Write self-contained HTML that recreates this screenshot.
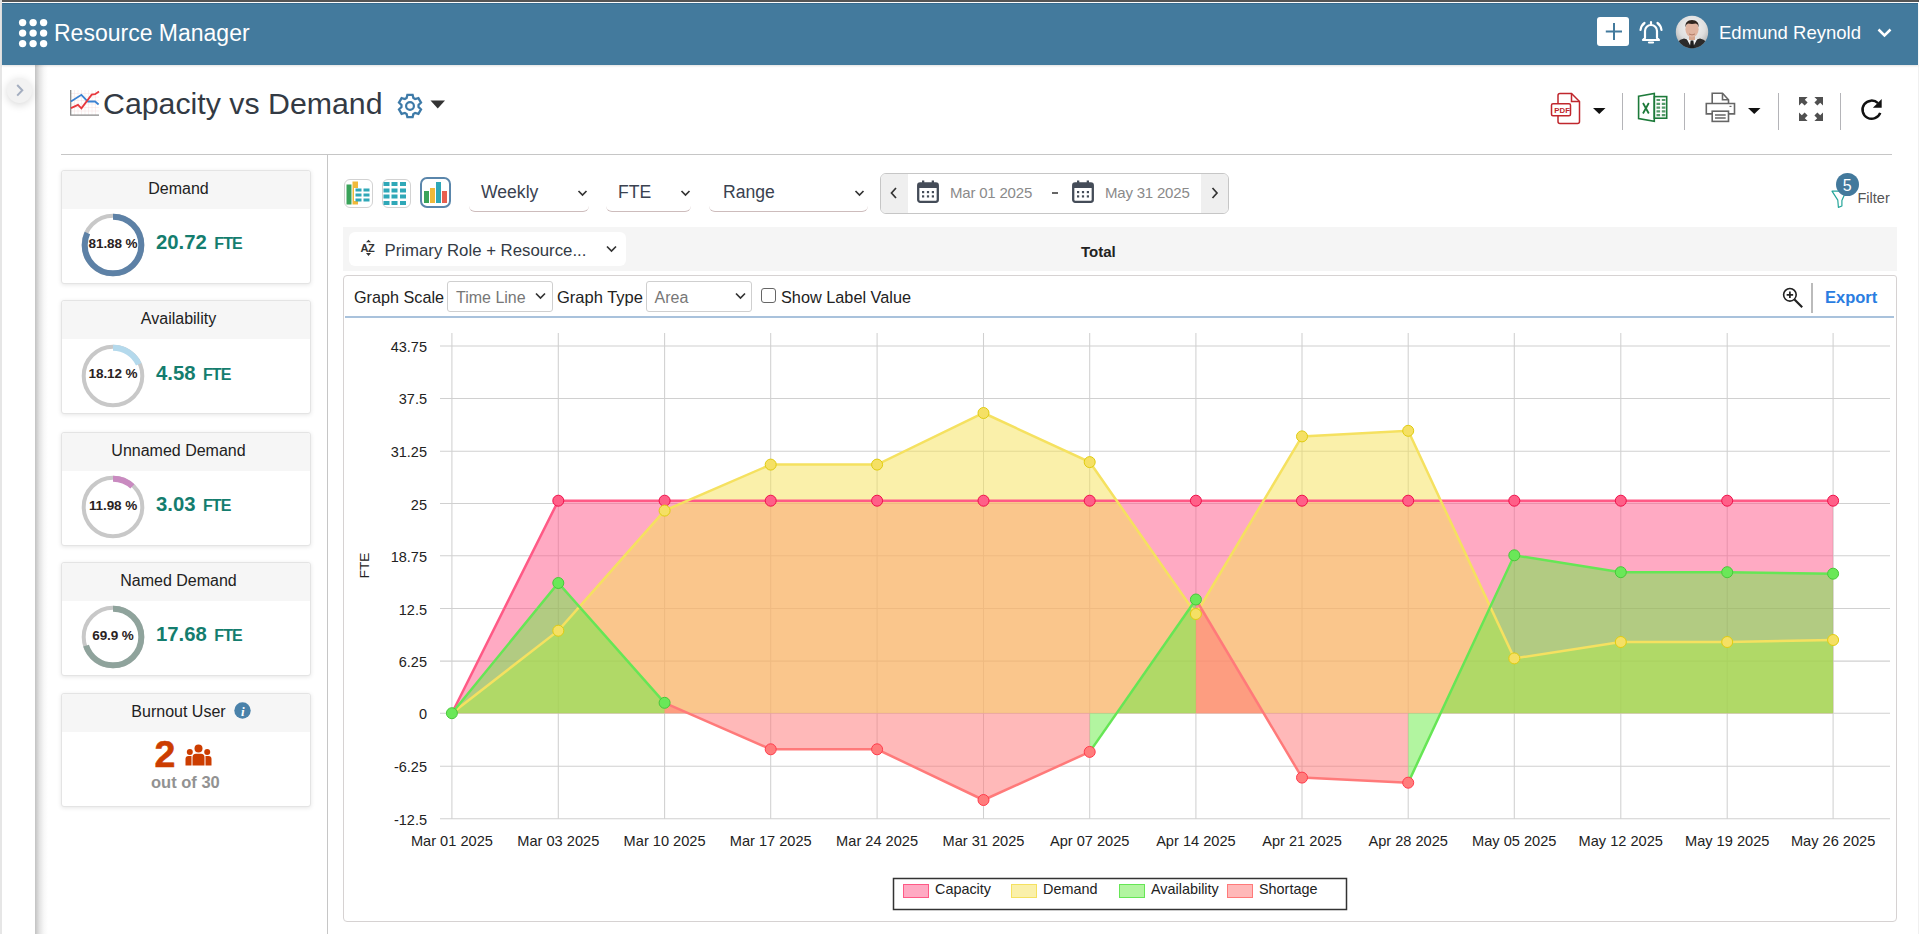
<!DOCTYPE html>
<html><head><meta charset="utf-8">
<style>
*{box-sizing:border-box;margin:0;padding:0}
html,body{width:1919px;height:934px;overflow:hidden;background:#fff;font-family:"Liberation Sans",sans-serif;color:#333}
.a{position:absolute}
.t{position:absolute;white-space:nowrap;line-height:1}
#topline{left:0;top:0;width:1919px;height:1.5px;background:#555}
#hdr{left:2px;top:3px;width:1916px;height:62px;background:#437a9d;border-top:1px solid #376c90;box-shadow:0 1px 2px rgba(0,0,0,0.12);z-index:2}
#lborder{left:0;top:0;width:1.5px;height:934px;background:#e6e6e6}
#rborder{left:1917.5px;top:65px;width:1.5px;height:869px;background:#f0f0f0}
#sidebar{left:2px;top:65px;width:33px;height:869px;background:#fff}
#shadow{left:35px;top:65px;width:13px;height:869px;background:linear-gradient(90deg,#c2c2c2 0%,#e4e4e4 35%,#f8f8f8 70%,#fff 100%)}
.card{position:absolute;left:61px;width:250px;height:114px;background:#fff;border:1px solid #e4e4e4;border-radius:3px;box-shadow:0 1px 4px rgba(0,0,0,0.10)}
.card .hd{position:absolute;left:0;top:0;width:100%;height:38px;background:#f6f6f6;border-radius:3px 3px 0 0}
.card .ttl{position:absolute;left:0;width:233px;text-align:center;top:10px;font-size:16px;color:#222;line-height:1}
.card svg{position:absolute;left:18.9px;top:42.6px}
.pct{position:absolute;left:19px;top:66px;width:64px;text-align:center;font-size:13.5px;font-weight:bold;color:#2a2222;line-height:1;letter-spacing:-0.1px}
.val{position:absolute;top:61.5px;font-size:20.3px;font-weight:bold;color:#147d6e;line-height:1}
.val span{font-size:16px;margin-left:7.5px;letter-spacing:-0.9px}
.sel{position:absolute;top:176px;height:36px;border-bottom:1.5px solid #cdbcbc;border-radius:0 0 6px 6px}
.sel .tx{position:absolute;left:12px;top:8px;font-size:17.6px;color:#3a4250;line-height:1}
.chev{position:absolute}
.sep{position:absolute;top:93px;width:1.5px;height:37px;background:#b4b4b8}
.tk{font-family:"Liberation Sans",sans-serif;font-size:14px;fill:#222}
.lg{font-family:"Liberation Sans",sans-serif;font-size:14px;fill:#222}
</style></head><body>
<div id="topline" class="a"></div>
<div id="lborder" class="a"></div>
<div id="hdr" class="a">
  <svg class="a" style="left:15px;top:13px" width="32" height="32" viewBox="0 0 32 32" fill="#fff">
    <circle cx="5.6" cy="5.6" r="3.7"/><circle cx="16.1" cy="5.6" r="3.7"/><circle cx="26.6" cy="5.6" r="3.7"/>
    <circle cx="5.6" cy="16.1" r="3.7"/><circle cx="16.1" cy="16.1" r="3.7"/><circle cx="26.6" cy="16.1" r="3.7"/>
    <circle cx="5.6" cy="26.6" r="3.7"/><circle cx="16.1" cy="26.6" r="3.7"/><circle cx="26.6" cy="26.6" r="3.7"/>
  </svg>
  <div class="t" style="left:52px;top:18px;font-size:23px;color:#fff">Resource Manager</div>
  <div class="a" style="left:1595px;top:13px;width:32px;height:29px;background:#fff;border-radius:3px"></div>
  <svg class="a" style="left:1595px;top:13px" width="32" height="29"><path d="M17 6 V23 M8.8 14.5 H25" stroke="#437a9d" stroke-width="2"/></svg>
  <svg class="a" style="left:1635px;top:15px" width="28" height="26" viewBox="0 0 28 26" fill="none" stroke="#fff" stroke-width="2.2" stroke-linecap="round">
    <path d="M8 19 V12 a6 6 0 0 1 12 0 V19 l2 2 H6 z" stroke-linejoin="round"/>
    <path d="M12 23.5 h4"/>
    <path d="M3.5 11 a10 10 0 0 1 4 -7"/><path d="M24.5 11 a10 10 0 0 0 -4 -7"/>
    <path d="M14 3 v2"/>
  </svg>
  <svg class="a" style="left:1673px;top:10.5px" width="34" height="34" viewBox="0 0 34 34">
    <defs><clipPath id="av"><circle cx="17" cy="17" r="16.2"/></clipPath>
    <radialGradient id="avg" cx="50%" cy="35%" r="65%"><stop offset="0" stop-color="#f6f6f6"/><stop offset="0.6" stop-color="#dedede"/><stop offset="1" stop-color="#a9a9a9"/></radialGradient></defs>
    <g clip-path="url(#av)">
      <rect width="34" height="34" fill="url(#avg)"/>
      <path d="M0 34 Q1 25 9 23.5 L17 26 L25 23.5 Q33 25 34 34 Z" fill="#2b2b2b"/>
      <path d="M11.5 23.5 L17 34 L22.5 23.5 L17 25.5 Z" fill="#f4f4f4"/>
      <path d="M15.6 25.5 h2.8 l0.9 8.5 h-4.6 z" fill="#1e1e1e"/>
      <rect x="14" y="19" width="6" height="6" fill="#d6a68e"/>
      <ellipse cx="17" cy="14.2" rx="6.6" ry="8.3" fill="#e0b4a0"/>
      <path d="M10.2 12.5 Q9.8 5.2 17 5 Q24.2 5.2 23.8 12.5 Q23 9 21 8.6 Q17 9.4 13 8.6 Q11 9 10.2 12.5z" fill="#2f241e"/>
      <path d="M14 19 Q17 20.8 20 19" stroke="#a66e5a" stroke-width="0.8" fill="none"/>
    </g>
  </svg>
  <div class="t" style="left:1717px;top:20px;font-size:18.5px;color:#fff">Edmund Reynold</div>
  <svg class="a" style="left:1873px;top:22.5px" width="18" height="12"><path d="M3.5 2.5 L9.5 8.5 L15.5 2.5" stroke="#fff" stroke-width="2.5" fill="none"/></svg>
</div>
<div id="sidebar" class="a"></div>
<div id="shadow" class="a"></div>
<div id="rborder" class="a"></div>
<div class="a" style="left:7px;top:78px;width:25px;height:25px;border-radius:50%;background:#f2f2f2;box-shadow:0 2px 9px rgba(0,0,0,0.16)"></div>
<svg class="a" style="left:7px;top:78px" width="25" height="25"><path d="M10.2 7 L15.3 12.3 L10.2 17.6" stroke="#a4aec0" stroke-width="2" fill="none"/></svg>

<!-- title -->
<svg class="a" style="left:69px;top:89px" width="32" height="28" viewBox="0 0 32 28">
  <g stroke="#f6e0e0" stroke-width="0.5"><path d="M2 4.5 H30 M2 8 H30 M2 11.5 H30 M2 15 H30 M2 18.5 H30 M2 22 H30 M5.5 1 V26 M9 1 V26 M12.5 1 V26 M16 1 V26 M19.5 1 V26 M23 1 V26 M26.5 1 V26"/></g>
  <path d="M1.7 1.1 V26.2 H30" stroke="#8a8a8a" stroke-width="1.3" fill="none"/>
  <path d="M1.9 12.5 L12.4 5.8 L18.8 12.5 L26.1 12.5 L29.6 15.5" stroke="#3a82d2" stroke-width="1.8" fill="none"/>
  <path d="M1.9 19.1 L9 15.9 L12.4 19.3 L22.7 5.6 L26.1 5.2 L30 2.4" stroke="#e8383d" stroke-width="1.8" fill="none"/>
</svg>
<div class="t" style="left:103px;top:89px;font-size:30.3px;color:#333a44">Capacity vs Demand</div>
<svg class="a" style="left:395.8px;top:91.5px" width="28" height="28" viewBox="0 0 28 28"><path fill="none" stroke="#3d7aa8" stroke-width="2.3" stroke-linejoin="miter" d="M10.60 6.10 L11.40 2.80 L16.60 2.80 L17.40 6.10 L19.14 7.11 L22.40 6.15 L25.00 10.65 L22.54 12.99 L22.54 15.01 L25.00 17.35 L22.40 21.85 L19.14 20.89 L17.40 21.90 L16.60 25.20 L11.40 25.20 L10.60 21.90 L8.86 20.89 L5.60 21.85 L3.00 17.35 L5.46 15.01 L5.46 12.99 L3.00 10.65 L5.60 6.15 L8.86 7.11Z"/><circle cx="14" cy="14" r="3.9" fill="none" stroke="#3d7aa8" stroke-width="2.2"/></svg>
<svg class="a" style="left:429.5px;top:100px" width="16" height="10"><path d="M0.5 0.5 H15 L7.75 8.5z" fill="#333"/></svg>

<!-- right toolbar -->
<svg class="a" style="left:1549px;top:92px" width="33" height="33" viewBox="0 0 33 33" fill="none" stroke="#c0272d" stroke-width="1.5">
  <path d="M9 11.5 V3.5 Q9 1.5 11 1.5 H22.5 L30.5 9.5 V29.5 Q30.5 31.5 28.5 31.5 H11 Q9 31.5 9 29.5 V24"/>
  <path d="M22.5 1.5 V9.5 H30.5"/>
  <rect x="2.5" y="11.8" width="19" height="12" rx="1.5"/>
  <text x="5.3" y="20.8" font-family="Liberation Sans" font-weight="bold" font-size="7.8" fill="#c0272d" stroke="none">PDF</text>
</svg>
<svg class="a" style="left:1592.5px;top:108px" width="14" height="8"><path d="M0 0 H12.5 L6.25 6z" fill="#111"/></svg>
<div class="sep" style="left:1621.5px"></div>
<svg class="a" style="left:1636px;top:92px" width="33" height="31" viewBox="0 0 33 31" fill="none" stroke="#1d7a3a" stroke-width="1.6">
  <path d="M2.6 4.2 L18.3 1.5 V29.4 L2.6 26.6 Z"/>
  <rect x="18.3" y="4.6" width="12.4" height="21.6"/>
  <path d="M20.5 8 h3.6 M25.8 8 h3.6 M20.5 11.8 h3.6 M25.8 11.8 h3.6 M20.5 15.6 h3.6 M25.8 15.6 h3.6 M20.5 19.4 h3.6 M25.8 19.4 h3.6 M20.5 23.2 h3.6 M25.8 23.2 h3.6" stroke-width="2.2" opacity="0.75"/>
  <path d="M7 11 L12.8 21.5 M12.8 11 L7 21.5" stroke-width="1.8"/>
</svg>
<div class="sep" style="left:1683.5px"></div>
<svg class="a" style="left:1704px;top:91px" width="33" height="33" viewBox="0 0 33 33" fill="none" stroke="#666" stroke-width="1.6">
  <path d="M8.2 12.5 V2.3 H18.5 L24.5 8.7 V12.5"/><path d="M18.5 2.3 V8.7 H24.5"/>
  <path d="M8.2 22.9 H2.3 V12.5 H30.5 V22.9 H24.5"/>
  <rect x="8.2" y="20.2" width="16.3" height="10.2" fill="#fff"/><path d="M11 24 H21.7 M11 26.9 H21.7" stroke-width="1.5"/><path d="M25.5 15.4 h2" stroke-width="1.2"/>
</svg>
<svg class="a" style="left:1748px;top:108px" width="14" height="8"><path d="M0 0 H12.5 L6.25 6z" fill="#111"/></svg>
<div class="sep" style="left:1777.5px"></div>
<svg class="a" style="left:1798px;top:96px" width="26" height="26" viewBox="0 0 26 26" fill="#505050">
  <path d="M1 1 H9.6 L6.8 3.8 L9.6 6.6 L6.6 9.6 L3.8 6.8 L1 9.6 Z"/>
  <path d="M25 1 H16.4 L19.2 3.8 L16.4 6.6 L19.4 9.6 L22.2 6.8 L25 9.6 Z"/>
  <path d="M1 25 H9.6 L6.8 22.2 L9.6 19.4 L6.6 16.4 L3.8 19.2 L1 16.4 Z"/>
  <path d="M25 25 H16.4 L19.2 22.2 L16.4 19.4 L19.4 16.4 L22.2 19.2 L25 16.4 Z"/>
</svg>
<div class="sep" style="left:1839.5px"></div>
<svg class="a" style="left:1859px;top:96px" width="26" height="26" viewBox="0 0 26 26">
  <path d="M19 7.2 A9.1 9.1 0 1 0 21.2 16.8" fill="none" stroke="#111" stroke-width="2.5"/>
  <path d="M13.9 11.8 L22.7 11.8 L22.7 2.9 Z" fill="#111"/>
</svg>

<div class="a" style="left:61px;top:153.5px;width:1831px;height:1.2px;background:#c6c6c6"></div>
<div class="a" style="left:326.8px;top:154px;width:1.2px;height:780px;background:#c6c6c6"></div>

<!-- KPI cards -->
<div class="card" style="top:169.5px">
  <div class="hd"></div><div class="ttl">Demand</div>
  <svg width="64" height="64" viewBox="0 0 64 64"><circle cx="32" cy="32" r="29.3" fill="none" stroke="#c8c8c8" stroke-width="4"/><circle cx="32" cy="32" r="28.3" fill="none" stroke="#5d81a6" stroke-width="6" stroke-dasharray="145.59 300" transform="rotate(-90 32 32)"/></svg>
  <div class="pct">81.88 %</div>
  <div class="val" style="left:94px">20.72<span>FTE</span></div>
</div>
<div class="card" style="top:300px">
  <div class="hd"></div><div class="ttl">Availability</div>
  <svg width="64" height="64" viewBox="0 0 64 64"><circle cx="32" cy="32" r="29.3" fill="none" stroke="#c8c8c8" stroke-width="4"/><circle cx="32" cy="32" r="28.3" fill="none" stroke="#b4d9ec" stroke-width="6" stroke-dasharray="32.22 300" transform="rotate(-90 32 32)"/></svg>
  <div class="pct">18.12 %</div>
  <div class="val" style="left:94px">4.58<span>FTE</span></div>
</div>
<div class="card" style="top:431.5px">
  <div class="hd"></div><div class="ttl">Unnamed Demand</div>
  <svg width="64" height="64" viewBox="0 0 64 64"><circle cx="32" cy="32" r="29.3" fill="none" stroke="#c8c8c8" stroke-width="4"/><circle cx="32" cy="32" r="28.3" fill="none" stroke="#c98ac0" stroke-width="6" stroke-dasharray="21.30 300" transform="rotate(-90 32 32)"/></svg>
  <div class="pct">11.98 %</div>
  <div class="val" style="left:94px">3.03<span>FTE</span></div>
</div>
<div class="card" style="top:561.5px">
  <div class="hd"></div><div class="ttl">Named Demand</div>
  <svg width="64" height="64" viewBox="0 0 64 64"><circle cx="32" cy="32" r="29.3" fill="none" stroke="#c8c8c8" stroke-width="4"/><circle cx="32" cy="32" r="28.3" fill="none" stroke="#8fa39c" stroke-width="6" stroke-dasharray="124.29 300" transform="rotate(-90 32 32)"/></svg>
  <div class="pct">69.9 %</div>
  <div class="val" style="left:94px">17.68<span>FTE</span></div>
</div>
<div class="card" style="top:692.5px">
  <div class="hd"></div><div class="ttl">Burnout User</div>
  <svg style="left:172px;top:8px" width="17" height="17" viewBox="0 0 17 17"><circle cx="8.5" cy="8.5" r="8.2" fill="#4a82aa"/><text x="8.8" y="13.5" text-anchor="middle" font-family="Liberation Serif" font-style="italic" font-weight="bold" font-size="13" fill="#fff">i</text></svg>
  <div class="t" style="left:92.5px;top:42px;font-size:37.5px;font-weight:bold;color:#cc3d00;-webkit-text-stroke:0.6px #cc3d00">2</div>
  <svg style="left:123px;top:50px" width="27" height="22" viewBox="0 0 27 22" fill="#cc3d00">
    <circle cx="13.5" cy="4.5" r="4"/><circle cx="4.8" cy="8" r="3"/><circle cx="22.2" cy="8" r="3"/>
    <path d="M7.5 21.5 V13.5 Q7.5 9.8 11 9.8 H16 Q19.5 9.8 19.5 13.5 V21.5 Z"/>
    <path d="M0.5 21.5 V15 Q0.5 12 3.5 12 H6.5 V21.5 Z"/><path d="M26.5 21.5 V15 Q26.5 12 23.5 12 H20.5 V21.5 Z"/>
  </svg>
  <div class="t" style="left:89px;top:80px;font-size:16.5px;font-weight:bold;color:#929292">out of 30</div>
</div>

<!-- toolbar -->
<div class="a" style="left:343.5px;top:178.8px;width:29px;height:29px;border:1px solid #d2d2d2;border-radius:6px"></div>
<svg class="a" style="left:343.5px;top:179.5px" width="29" height="28">
  <rect x="2.5" y="4.5" width="5" height="20" fill="#3aa35a"/><rect x="8.5" y="1.5" width="5.5" height="23" fill="#f0b93a"/>
  <rect x="10" y="8" width="6" height="13" fill="#fff"/>
  <g fill="#2fa8b8"><rect x="11.5" y="8.5" width="6" height="3"/><rect x="19.5" y="8.5" width="6" height="3"/><rect x="11.5" y="13.5" width="6" height="3"/><rect x="19.5" y="13.5" width="6" height="3"/><rect x="11.5" y="18.5" width="6" height="3"/><rect x="19.5" y="18.5" width="6" height="3"/></g>
</svg>
<div class="a" style="left:381.5px;top:178.8px;width:29px;height:29px;border:1px solid #d2d2d2;border-radius:6px"></div>
<svg class="a" style="left:380.3px;top:178.6px" width="29" height="28"><g fill="#2fa8b8">
  <rect x="3.5" y="3" width="6" height="4"/><rect x="11.5" y="3" width="6" height="4"/><rect x="20" y="3" width="6" height="4"/>
  <rect x="3.5" y="9.5" width="6" height="4"/><rect x="11.5" y="9.5" width="6" height="4"/><rect x="20" y="9.5" width="6" height="4"/>
  <rect x="3.5" y="15.5" width="6" height="4"/><rect x="11.5" y="15.5" width="6" height="4"/><rect x="20" y="15.5" width="6" height="4"/>
  <rect x="3.5" y="22" width="6" height="4"/><rect x="11.5" y="22" width="6" height="4"/><rect x="20" y="22" width="6" height="4"/></g></svg>
<div class="a" style="left:420px;top:177px;width:31px;height:31px;border:2px solid #5a86ab;border-radius:7px"></div>
<svg class="a" style="left:420px;top:177px" width="31" height="31">
  <rect x="4" y="14" width="5" height="12" fill="#3aa35a"/><rect x="10" y="11" width="5" height="15" fill="#f0b93a"/>
  <rect x="16" y="5" width="5" height="21" fill="#2fa8b8"/><rect x="22" y="14" width="5" height="12" fill="#e8604f"/>
</svg>

<div class="sel" style="left:469px;width:120px"><div class="tx">Weekly</div>
  <svg class="chev" style="left:108px;top:13px" width="12" height="9"><path d="M1.5 2 L5.5 6 L9.5 2" stroke="#333" stroke-width="1.7" fill="none"/></svg></div>
<div class="sel" style="left:606px;width:85px"><div class="tx">FTE</div>
  <svg class="chev" style="left:74px;top:13px" width="12" height="9"><path d="M1.5 2 L5.5 6 L9.5 2" stroke="#333" stroke-width="1.7" fill="none"/></svg></div>
<div class="sel" style="left:709px;width:159px"><div class="tx" style="left:14px">Range</div>
  <svg class="chev" style="left:145px;top:13px" width="12" height="9"><path d="M1.5 2 L5.5 6 L9.5 2" stroke="#333" stroke-width="1.7" fill="none"/></svg></div>

<!-- date range -->
<div class="a" style="left:880px;top:173px;width:349px;height:40.5px;border:1.2px solid #c6c6c6;border-radius:6px;background:#fff;overflow:hidden">
  <div class="a" style="left:0;top:0;width:27px;height:40px;background:#efefef"></div>
  <div class="a" style="right:0;top:0;width:27px;height:40px;background:#efefef"></div>
</div>
<svg class="a" style="left:888px;top:186px" width="12" height="14"><path d="M8 2 L3.5 7 L8 12" stroke="#333" stroke-width="1.7" fill="none"/></svg>
<svg class="a" style="left:1209px;top:186px" width="12" height="14"><path d="M3.5 2 L8 7 L3.5 12" stroke="#333" stroke-width="1.7" fill="none"/></svg>
<svg class="a" style="left:917px;top:180px" width="22" height="23" viewBox="0 0 22 23">
  <rect x="1.2" y="3.5" width="19.6" height="18.3" rx="2" fill="none" stroke="#444c58" stroke-width="2.3"/>
  <rect x="1" y="3.5" width="20" height="4.5" fill="#444c58"/>
  <rect x="5" y="0.5" width="2.3" height="5" fill="#444c58"/><rect x="14.7" y="0.5" width="2.3" height="5" fill="#444c58"/>
  <g fill="#444c58"><rect x="5" y="11" width="2.2" height="2.2"/><rect x="9.9" y="11" width="2.2" height="2.2"/><rect x="14.8" y="11" width="2.2" height="2.2"/>
  <rect x="5" y="15.3" width="2.2" height="2.2"/><rect x="9.9" y="15.3" width="2.2" height="2.2"/><rect x="14.8" y="15.3" width="2.2" height="2.2"/></g>
</svg>
<div class="t" style="left:950px;top:185px;font-size:15px;color:#8a8a8a;letter-spacing:-0.2px">Mar 01 2025</div>
<div class="a" style="left:1052px;top:192.2px;width:5.5px;height:2px;background:#666"></div>
<svg class="a" style="left:1072px;top:180px" width="22" height="23" viewBox="0 0 22 23">
  <rect x="1.2" y="3.5" width="19.6" height="18.3" rx="2" fill="none" stroke="#444c58" stroke-width="2.3"/>
  <rect x="1" y="3.5" width="20" height="4.5" fill="#444c58"/>
  <rect x="5" y="0.5" width="2.3" height="5" fill="#444c58"/><rect x="14.7" y="0.5" width="2.3" height="5" fill="#444c58"/>
  <g fill="#444c58"><rect x="5" y="11" width="2.2" height="2.2"/><rect x="9.9" y="11" width="2.2" height="2.2"/><rect x="14.8" y="11" width="2.2" height="2.2"/>
  <rect x="5" y="15.3" width="2.2" height="2.2"/><rect x="9.9" y="15.3" width="2.2" height="2.2"/><rect x="14.8" y="15.3" width="2.2" height="2.2"/></g>
</svg>
<div class="t" style="left:1105px;top:185px;font-size:15px;color:#8a8a8a;letter-spacing:-0.2px">May 31 2025</div>

<!-- filter -->
<svg class="a" style="left:1830px;top:189px" width="18" height="21"><path d="M2 2.2 H16 L11.9 11.5 V17 L8.4 18.4 L7.8 11.2 Z" fill="none" stroke="#26a69a" stroke-width="1.2" stroke-linejoin="round"/></svg>
<div class="a" style="left:1835.8px;top:173.2px;width:23px;height:23px;border-radius:50%;background:#43799c"></div>
<div class="t" style="left:1835.8px;top:178px;width:23px;text-align:center;font-size:16px;color:#fff">5</div>
<div class="t" style="left:1857.5px;top:191px;font-size:14.5px;color:#555">Filter</div>

<!-- band -->
<div class="a" style="left:343px;top:227px;width:1554px;height:44px;background:#f5f5f5"></div>
<div class="a" style="left:348.5px;top:232px;width:277px;height:34px;background:#fff;border-radius:6px"></div>
<svg class="a" style="left:360px;top:238px" width="18" height="20" viewBox="0 0 18 20">
  <text x="0.6" y="13.9" font-family="Liberation Sans" font-weight="bold" font-size="11" fill="#333" letter-spacing="-0.6">AZ</text>
  <path d="M6 4.2 L8.5 1.8 L11 4.2 Z M6 15 L11 15 L8.5 17.9 Z" fill="#333"/>
</svg>
<div class="t" style="left:384.5px;top:242.8px;font-size:16.8px;color:#333a44">Primary Role + Resource...</div>
<svg class="a" style="left:604.5px;top:243.8px" width="13" height="10"><path d="M2 2.5 L6.5 7 L11 2.5" stroke="#333" stroke-width="1.7" fill="none"/></svg>
<div class="t" style="left:1081px;top:244px;font-size:15px;font-weight:bold;color:#222">Total</div>

<!-- chart panel -->
<div class="a" style="left:343px;top:275px;width:1554px;height:647px;border:1.2px solid #d6d2d2;border-radius:4px 3px 4px 4px;background:#fff"></div>
<div class="t" style="left:354px;top:289px;font-size:16.2px;color:#222">Graph Scale</div>
<div class="a" style="left:447px;top:281px;width:106px;height:31px;border:1.2px solid #cfcfcf;border-radius:3px"></div>
<div class="t" style="left:456px;top:289.5px;font-size:16px;color:#777">Time Line</div>
<svg class="a" style="left:534px;top:291.2px" width="13" height="10"><path d="M2 2.5 L6.5 7 L11 2.5" stroke="#333" stroke-width="1.7" fill="none"/></svg>
<div class="t" style="left:557px;top:289px;font-size:16.5px;color:#222">Graph Type</div>
<div class="a" style="left:646px;top:281px;width:106px;height:31px;border:1.2px solid #cfcfcf;border-radius:3px"></div>
<div class="t" style="left:654.5px;top:289.5px;font-size:16px;color:#777">Area</div>
<svg class="a" style="left:734px;top:291.2px" width="13" height="10"><path d="M2 2.5 L6.5 7 L11 2.5" stroke="#333" stroke-width="1.7" fill="none"/></svg>
<div class="a" style="left:761px;top:288px;width:15px;height:15px;border:1.5px solid #666;border-radius:3px"></div>
<div class="t" style="left:781px;top:289px;font-size:16.3px;color:#222">Show Label Value</div>
<svg class="a" style="left:1781px;top:286px" width="24" height="24" viewBox="0 0 24 24">
  <circle cx="8.9" cy="8.85" r="6.3" fill="none" stroke="#222" stroke-width="1.6"/>
  <path d="M8.9 5.6 V12.1 M5.65 8.85 H12.15" stroke="#222" stroke-width="1.7"/>
  <path d="M13.5 13.5 L21.2 21.2" stroke="#222" stroke-width="2.2"/>
</svg>
<div class="a" style="left:1811px;top:283px;width:2px;height:30px;background:#bbb"></div>
<div class="t" style="left:1825px;top:288.5px;font-size:16.5px;font-weight:bold;color:#2a7de1">Export</div>
<div class="a" style="left:345px;top:315.8px;width:1549px;height:2px;background:#a9c2dc"></div>

<svg class="a" style="left:0;top:0" width="1919" height="934">
<line x1="440" y1="346.0" x2="1890" y2="346.0" stroke="#d0d0d0" stroke-width="1.05"/>
<line x1="440" y1="398.4" x2="1890" y2="398.4" stroke="#d0d0d0" stroke-width="1.05"/>
<line x1="440" y1="451.2" x2="1890" y2="451.2" stroke="#d0d0d0" stroke-width="1.05"/>
<line x1="440" y1="503.5" x2="1890" y2="503.5" stroke="#d0d0d0" stroke-width="1.05"/>
<line x1="440" y1="555.8" x2="1890" y2="555.8" stroke="#d0d0d0" stroke-width="1.05"/>
<line x1="440" y1="608.5" x2="1890" y2="608.5" stroke="#d0d0d0" stroke-width="1.05"/>
<line x1="440" y1="661.1" x2="1890" y2="661.1" stroke="#d0d0d0" stroke-width="1.05"/>
<line x1="440" y1="713.2" x2="1890" y2="713.2" stroke="#d0d0d0" stroke-width="1.05"/>
<line x1="440" y1="766.2" x2="1890" y2="766.2" stroke="#d0d0d0" stroke-width="1.05"/>
<line x1="440" y1="818.7" x2="1890" y2="818.7" stroke="#d0d0d0" stroke-width="1.05"/>
<line x1="451.9" y1="333" x2="451.9" y2="818.7" stroke="#d0d0d0" stroke-width="1.05"/>
<line x1="558.3" y1="333" x2="558.3" y2="818.7" stroke="#d0d0d0" stroke-width="1.05"/>
<line x1="664.6" y1="333" x2="664.6" y2="818.7" stroke="#d0d0d0" stroke-width="1.05"/>
<line x1="770.7" y1="333" x2="770.7" y2="818.7" stroke="#d0d0d0" stroke-width="1.05"/>
<line x1="877.1" y1="333" x2="877.1" y2="818.7" stroke="#d0d0d0" stroke-width="1.05"/>
<line x1="983.5" y1="333" x2="983.5" y2="818.7" stroke="#d0d0d0" stroke-width="1.05"/>
<line x1="1089.7" y1="333" x2="1089.7" y2="818.7" stroke="#d0d0d0" stroke-width="1.05"/>
<line x1="1195.9" y1="333" x2="1195.9" y2="818.7" stroke="#d0d0d0" stroke-width="1.05"/>
<line x1="1302.0" y1="333" x2="1302.0" y2="818.7" stroke="#d0d0d0" stroke-width="1.05"/>
<line x1="1408.2" y1="333" x2="1408.2" y2="818.7" stroke="#d0d0d0" stroke-width="1.05"/>
<line x1="1514.3" y1="333" x2="1514.3" y2="818.7" stroke="#d0d0d0" stroke-width="1.05"/>
<line x1="1620.8" y1="333" x2="1620.8" y2="818.7" stroke="#d0d0d0" stroke-width="1.05"/>
<line x1="1727.2" y1="333" x2="1727.2" y2="818.7" stroke="#d0d0d0" stroke-width="1.05"/>
<line x1="1833.1" y1="333" x2="1833.1" y2="818.7" stroke="#d0d0d0" stroke-width="1.05"/>
<text x="427" y="352.0" text-anchor="end" class="tk" style="font-size:14.5px">43.75</text>
<text x="427" y="404.4" text-anchor="end" class="tk" style="font-size:14.5px">37.5</text>
<text x="427" y="457.2" text-anchor="end" class="tk" style="font-size:14.5px">31.25</text>
<text x="427" y="509.5" text-anchor="end" class="tk" style="font-size:14.5px">25</text>
<text x="427" y="561.8" text-anchor="end" class="tk" style="font-size:14.5px">18.75</text>
<text x="427" y="614.5" text-anchor="end" class="tk" style="font-size:14.5px">12.5</text>
<text x="427" y="667.1" text-anchor="end" class="tk" style="font-size:14.5px">6.25</text>
<text x="427" y="719.2" text-anchor="end" class="tk" style="font-size:14.5px">0</text>
<text x="427" y="772.2" text-anchor="end" class="tk" style="font-size:14.5px">-6.25</text>
<text x="427" y="824.7" text-anchor="end" class="tk" style="font-size:14.5px">-12.5</text>
<text x="451.9" y="846" text-anchor="middle" class="tk" style="font-size:14.6px">Mar 01 2025</text>
<text x="558.3" y="846" text-anchor="middle" class="tk" style="font-size:14.6px">Mar 03 2025</text>
<text x="664.6" y="846" text-anchor="middle" class="tk" style="font-size:14.6px">Mar 10 2025</text>
<text x="770.7" y="846" text-anchor="middle" class="tk" style="font-size:14.6px">Mar 17 2025</text>
<text x="877.1" y="846" text-anchor="middle" class="tk" style="font-size:14.6px">Mar 24 2025</text>
<text x="983.5" y="846" text-anchor="middle" class="tk" style="font-size:14.6px">Mar 31 2025</text>
<text x="1089.7" y="846" text-anchor="middle" class="tk" style="font-size:14.6px">Apr 07 2025</text>
<text x="1195.9" y="846" text-anchor="middle" class="tk" style="font-size:14.6px">Apr 14 2025</text>
<text x="1302.0" y="846" text-anchor="middle" class="tk" style="font-size:14.6px">Apr 21 2025</text>
<text x="1408.2" y="846" text-anchor="middle" class="tk" style="font-size:14.6px">Apr 28 2025</text>
<text x="1514.3" y="846" text-anchor="middle" class="tk" style="font-size:14.6px">May 05 2025</text>
<text x="1620.8" y="846" text-anchor="middle" class="tk" style="font-size:14.6px">May 12 2025</text>
<text x="1727.2" y="846" text-anchor="middle" class="tk" style="font-size:14.6px">May 19 2025</text>
<text x="1833.1" y="846" text-anchor="middle" class="tk" style="font-size:14.6px">May 26 2025</text>
<text transform="translate(369.3,565.4) rotate(-90)" text-anchor="middle" class="tk" style="font-size:13.5px">FTE</text>
<polygon points="451.9,713.2 451.9,713.2 558.3,500.7 664.6,500.7 770.7,500.7 877.1,500.7 983.5,500.7 1089.7,500.7 1195.9,500.7 1302.0,500.7 1408.2,500.7 1514.3,500.7 1620.8,500.7 1727.2,500.7 1833.1,500.7 1833.1,713.2" fill="rgba(255,85,135,0.5)"/>
<polygon points="451.9,713.2 451.9,713.2 558.3,630.7 664.6,510.6 770.7,464.6 877.1,464.6 983.5,413.0 1089.7,462.1 1195.9,614.0 1302.0,436.4 1408.2,430.8 1514.3,658.4 1620.8,642.0 1727.2,642.0 1833.1,640.0 1833.1,713.2" fill="rgba(245,225,85,0.5)"/>
<polygon points="451.9,713.2 451.9,713.2 558.3,583.0 664.6,702.8 664.6,713.2" fill="rgba(101,235,65,0.5)"/>
<polygon points="1089.7,713.2 1089.7,751.9 1195.9,599.5 1195.9,713.2" fill="rgba(101,235,65,0.5)"/>
<polygon points="1408.2,713.2 1408.2,782.7 1514.3,555.3 1620.8,572.2 1727.2,572.2 1833.1,573.7 1833.1,713.2" fill="rgba(101,235,65,0.5)"/>
<polygon points="664.6,713.2 664.6,702.8 770.7,749.3 877.1,749.3 983.5,800.0 1089.7,751.9 1089.7,713.2" fill="rgba(255,115,115,0.5)"/>
<polygon points="1195.9,713.2 1195.9,599.5 1302.0,777.6 1408.2,782.7 1408.2,713.2" fill="rgba(255,115,115,0.5)"/>
<polyline points="451.9,713.2 558.3,500.7 664.6,500.7 770.7,500.7 877.1,500.7 983.5,500.7 1089.7,500.7 1195.9,500.7 1302.0,500.7 1408.2,500.7 1514.3,500.7 1620.8,500.7 1727.2,500.7 1833.1,500.7" fill="none" stroke="#ff5a86" stroke-width="2.5"/>
<circle cx="558.3" cy="500.7" r="5.5" fill="#ff5f88" stroke="#f0104a" stroke-width="1"/>
<circle cx="664.6" cy="500.7" r="5.5" fill="#ff5f88" stroke="#f0104a" stroke-width="1"/>
<circle cx="770.7" cy="500.7" r="5.5" fill="#ff5f88" stroke="#f0104a" stroke-width="1"/>
<circle cx="877.1" cy="500.7" r="5.5" fill="#ff5f88" stroke="#f0104a" stroke-width="1"/>
<circle cx="983.5" cy="500.7" r="5.5" fill="#ff5f88" stroke="#f0104a" stroke-width="1"/>
<circle cx="1089.7" cy="500.7" r="5.5" fill="#ff5f88" stroke="#f0104a" stroke-width="1"/>
<circle cx="1195.9" cy="500.7" r="5.5" fill="#ff5f88" stroke="#f0104a" stroke-width="1"/>
<circle cx="1302.0" cy="500.7" r="5.5" fill="#ff5f88" stroke="#f0104a" stroke-width="1"/>
<circle cx="1408.2" cy="500.7" r="5.5" fill="#ff5f88" stroke="#f0104a" stroke-width="1"/>
<circle cx="1514.3" cy="500.7" r="5.5" fill="#ff5f88" stroke="#f0104a" stroke-width="1"/>
<circle cx="1620.8" cy="500.7" r="5.5" fill="#ff5f88" stroke="#f0104a" stroke-width="1"/>
<circle cx="1727.2" cy="500.7" r="5.5" fill="#ff5f88" stroke="#f0104a" stroke-width="1"/>
<circle cx="1833.1" cy="500.7" r="5.5" fill="#ff5f88" stroke="#f0104a" stroke-width="1"/>
<polyline points="451.9,713.2 558.3,630.7 664.6,510.6 770.7,464.6 877.1,464.6 983.5,413.0 1089.7,462.1 1195.9,614.0 1302.0,436.4 1408.2,430.8 1514.3,658.4 1620.8,642.0 1727.2,642.0 1833.1,640.0" fill="none" stroke="#f5e160" stroke-width="2.5"/>
<circle cx="558.3" cy="630.7" r="5.5" fill="#f5e064" stroke="#e0cc10" stroke-width="1"/>
<circle cx="664.6" cy="510.6" r="5.5" fill="#f5e064" stroke="#e0cc10" stroke-width="1"/>
<circle cx="770.7" cy="464.6" r="5.5" fill="#f5e064" stroke="#e0cc10" stroke-width="1"/>
<circle cx="877.1" cy="464.6" r="5.5" fill="#f5e064" stroke="#e0cc10" stroke-width="1"/>
<circle cx="983.5" cy="413.0" r="5.5" fill="#f5e064" stroke="#e0cc10" stroke-width="1"/>
<circle cx="1089.7" cy="462.1" r="5.5" fill="#f5e064" stroke="#e0cc10" stroke-width="1"/>
<circle cx="1195.9" cy="614.0" r="5.5" fill="#f5e064" stroke="#e0cc10" stroke-width="1"/>
<circle cx="1302.0" cy="436.4" r="5.5" fill="#f5e064" stroke="#e0cc10" stroke-width="1"/>
<circle cx="1408.2" cy="430.8" r="5.5" fill="#f5e064" stroke="#e0cc10" stroke-width="1"/>
<circle cx="1514.3" cy="658.4" r="5.5" fill="#f5e064" stroke="#e0cc10" stroke-width="1"/>
<circle cx="1620.8" cy="642.0" r="5.5" fill="#f5e064" stroke="#e0cc10" stroke-width="1"/>
<circle cx="1727.2" cy="642.0" r="5.5" fill="#f5e064" stroke="#e0cc10" stroke-width="1"/>
<circle cx="1833.1" cy="640.0" r="5.5" fill="#f5e064" stroke="#e0cc10" stroke-width="1"/>
<polyline points="451.9,713.2 558.3,583.0 664.6,702.8" fill="none" stroke="#66e655" stroke-width="2.5"/>
<polyline points="1089.7,751.9 1195.9,599.5" fill="none" stroke="#66e655" stroke-width="2.5"/>
<polyline points="1408.2,782.7 1514.3,555.3 1620.8,572.2 1727.2,572.2 1833.1,573.7" fill="none" stroke="#66e655" stroke-width="2.5"/>
<polyline points="664.6,702.8 770.7,749.3 877.1,749.3 983.5,800.0 1089.7,751.9" fill="none" stroke="#ff7a7a" stroke-width="2.5"/>
<polyline points="1195.9,599.5 1302.0,777.6 1408.2,782.7" fill="none" stroke="#ff7a7a" stroke-width="2.5"/>
<circle cx="770.7" cy="749.3" r="5.5" fill="#ff7c7c" stroke="#ff3c4c" stroke-width="1"/>
<circle cx="877.1" cy="749.3" r="5.5" fill="#ff7c7c" stroke="#ff3c4c" stroke-width="1"/>
<circle cx="983.5" cy="800.0" r="5.5" fill="#ff7c7c" stroke="#ff3c4c" stroke-width="1"/>
<circle cx="1089.7" cy="751.9" r="5.5" fill="#ff7c7c" stroke="#ff3c4c" stroke-width="1"/>
<circle cx="1302.0" cy="777.6" r="5.5" fill="#ff7c7c" stroke="#ff3c4c" stroke-width="1"/>
<circle cx="1408.2" cy="782.7" r="5.5" fill="#ff7c7c" stroke="#ff3c4c" stroke-width="1"/>
<circle cx="451.9" cy="713.2" r="5.5" fill="#6ae858" stroke="#48c83a" stroke-width="1"/>
<circle cx="558.3" cy="583.0" r="5.5" fill="#6ae858" stroke="#48c83a" stroke-width="1"/>
<circle cx="664.6" cy="702.8" r="5.5" fill="#6ae858" stroke="#48c83a" stroke-width="1"/>
<circle cx="1195.9" cy="599.5" r="5.5" fill="#6ae858" stroke="#48c83a" stroke-width="1"/>
<circle cx="1514.3" cy="555.3" r="5.5" fill="#6ae858" stroke="#48c83a" stroke-width="1"/>
<circle cx="1620.8" cy="572.2" r="5.5" fill="#6ae858" stroke="#48c83a" stroke-width="1"/>
<circle cx="1727.2" cy="572.2" r="5.5" fill="#6ae858" stroke="#48c83a" stroke-width="1"/>
<circle cx="1833.1" cy="573.7" r="5.5" fill="#6ae858" stroke="#48c83a" stroke-width="1"/>
<rect x="893.5" y="878.5" width="453" height="31" fill="#fff" stroke="#333" stroke-width="1.5"/>
<rect x="903.5" y="884.5" width="25" height="13" fill="rgba(255,85,135,0.5)" stroke="#ff5a86" stroke-width="1"/>
<text x="935.0" y="894" class="lg" style="font-size:14.4px">Capacity</text>
<rect x="1011.5" y="884.5" width="25" height="13" fill="rgba(245,225,85,0.5)" stroke="#f5e160" stroke-width="1"/>
<text x="1043.0" y="894" class="lg" style="font-size:14.4px">Demand</text>
<rect x="1119.5" y="884.5" width="25" height="13" fill="rgba(101,235,65,0.5)" stroke="#66e655" stroke-width="1"/>
<text x="1151.0" y="894" class="lg" style="font-size:14.4px">Availability</text>
<rect x="1227.5" y="884.5" width="25" height="13" fill="rgba(255,115,115,0.5)" stroke="#ff7a7a" stroke-width="1"/>
<text x="1259.0" y="894" class="lg" style="font-size:14.4px">Shortage</text>
</svg>
</body></html>
